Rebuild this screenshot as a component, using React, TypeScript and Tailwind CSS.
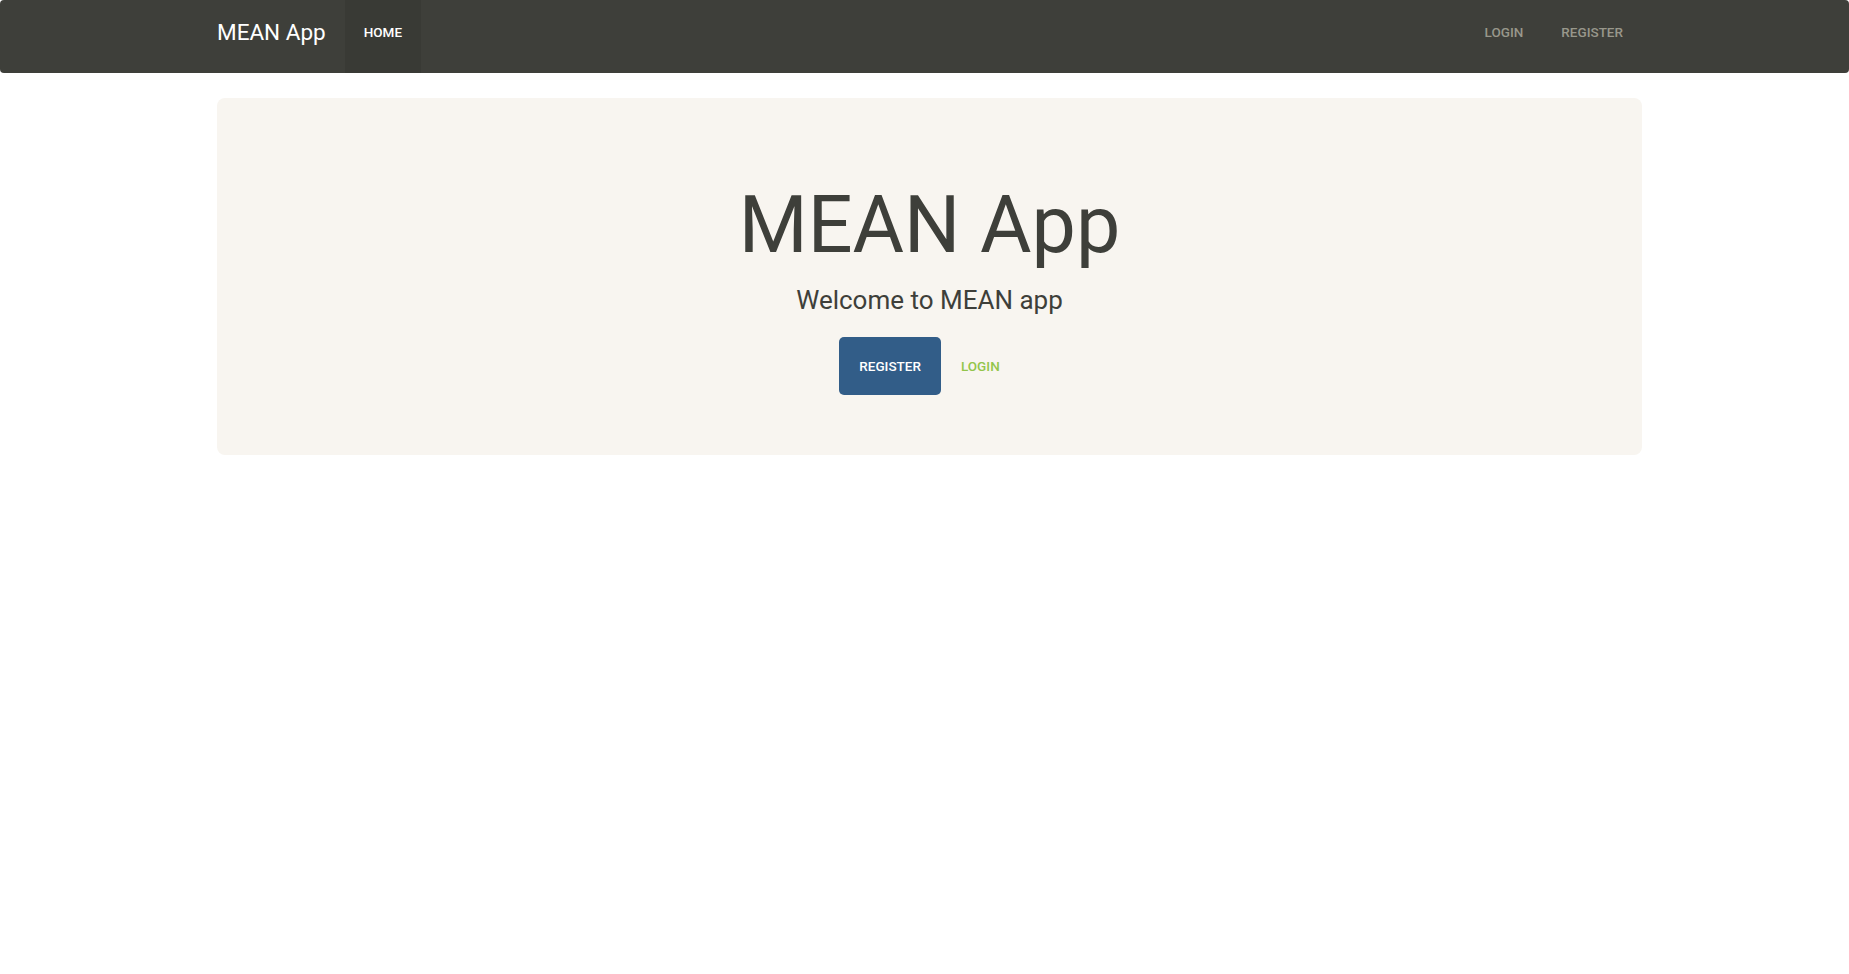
import React from 'react';

const FONT = { fontFamily: 'Roboto, "Noto Sans", Arial, sans-serif' };

export default function App() {
  return (
    <div className="min-h-screen bg-white text-[#3e3f3a]" style={FONT}>
      {/* NAVBAR */}
      <nav className="h-[73px] w-full bg-[#3e3f3a] rounded-[4px]">
        <div className="ml-[217px] w-[1425px] h-full flex items-stretch">
          <a href="#" className="pt-[19px] text-[22.5px] leading-[26px] text-white mr-[19px]">
            MEAN App
          </a>
          <a href="#" className="bg-[#393a35] px-[19px] pt-[23px] text-[13.5px] leading-[18px] font-medium uppercase text-white">
            Home
          </a>
          <div className="ml-auto flex items-stretch">
            <a href="#" className="px-[19px] pt-[23px] text-[13.5px] leading-[18px] font-medium uppercase text-[#98978b]">
              Login
            </a>
            <a href="#" className="px-[19px] pt-[23px] text-[13.5px] leading-[18px] font-medium uppercase text-[#98978b]">
              Register
            </a>
          </div>
        </div>
      </nav>

      {/* JUMBOTRON */}
      <main className="ml-[217px] w-[1425px] mt-[25px]">
        <div className="bg-[#f8f5f0] rounded-lg pt-[84px] pb-[60px] flex flex-col items-center text-center">
          <h1 className="text-[79px] leading-[87px] font-normal text-[#3e3f3a]">MEAN App</h1>
          <p className="mt-[13px] text-[26px] leading-[36px] text-[#3e3f3a]">Welcome to MEAN app</p>
          <div className="mt-[19px] flex items-center">
            <a href="#" className="h-[58px] px-[20px] flex items-center rounded-[5px] bg-[#325d88] text-white text-[13.5px] font-medium uppercase">
              Register
            </a>
            <a href="#" className="h-[58px] px-[20px] flex items-center text-[#93c54b] text-[13.5px] font-medium uppercase">
              Login
            </a>
          </div>
        </div>
      </main>
    </div>
  );
}
